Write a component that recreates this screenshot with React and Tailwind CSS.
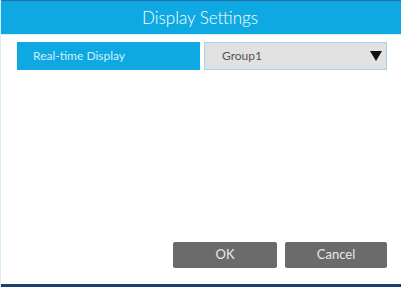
import React from "react";

export default function App() {
  return (
    <div className="w-[401px] h-[287px] bg-white flex flex-col font-['Lato',sans-serif] border-l border-[#d7eef8]">
      <div className="h-[1px] bg-[#2a6aa6]" />
      <div className="h-[33px] bg-[#0ea9e2] flex items-center justify-center text-white text-[17px] font-light pr-[2px]">
        Display Settings
      </div>
      <div className="h-[1px] bg-[#cdeefb]" />
      <div className="flex-1 flex flex-col pl-[16px] pr-[14px] pt-[7px]">
        <div className="flex gap-[4px] h-[28px]">
          <div className="w-[183px] bg-[#0ea9e2] text-[#cfeefb] text-[12px] flex items-center pl-[16px]">
            Real-time Display
          </div>
          <div className="w-[183px] bg-[#e1e1e1] border border-[#9fd4ea] text-[#555] text-[12px] flex items-center pl-[17px] pr-[4px] justify-between">
            <span>Group1</span>
            <svg width="12" height="10" viewBox="0 0 12 10">
              <path d="M0 0 H12 L6 10 Z" fill="#111" />
            </svg>
          </div>
        </div>
        <div className="flex-1" />
        <div className="flex justify-end gap-[8px] pb-[16px]">
          <button className="w-[104px] h-[26px] bg-[#6b6b6b] rounded-[2px] text-[#e8e8e8] text-[13px]">OK</button>
          <button className="w-[102px] h-[26px] bg-[#6b6b6b] rounded-[2px] text-[#e8e8e8] text-[13px]">Cancel</button>
        </div>
      </div>
      <div className="h-[3px] bg-[#1b3f6e]" />
    </div>
  );
}
